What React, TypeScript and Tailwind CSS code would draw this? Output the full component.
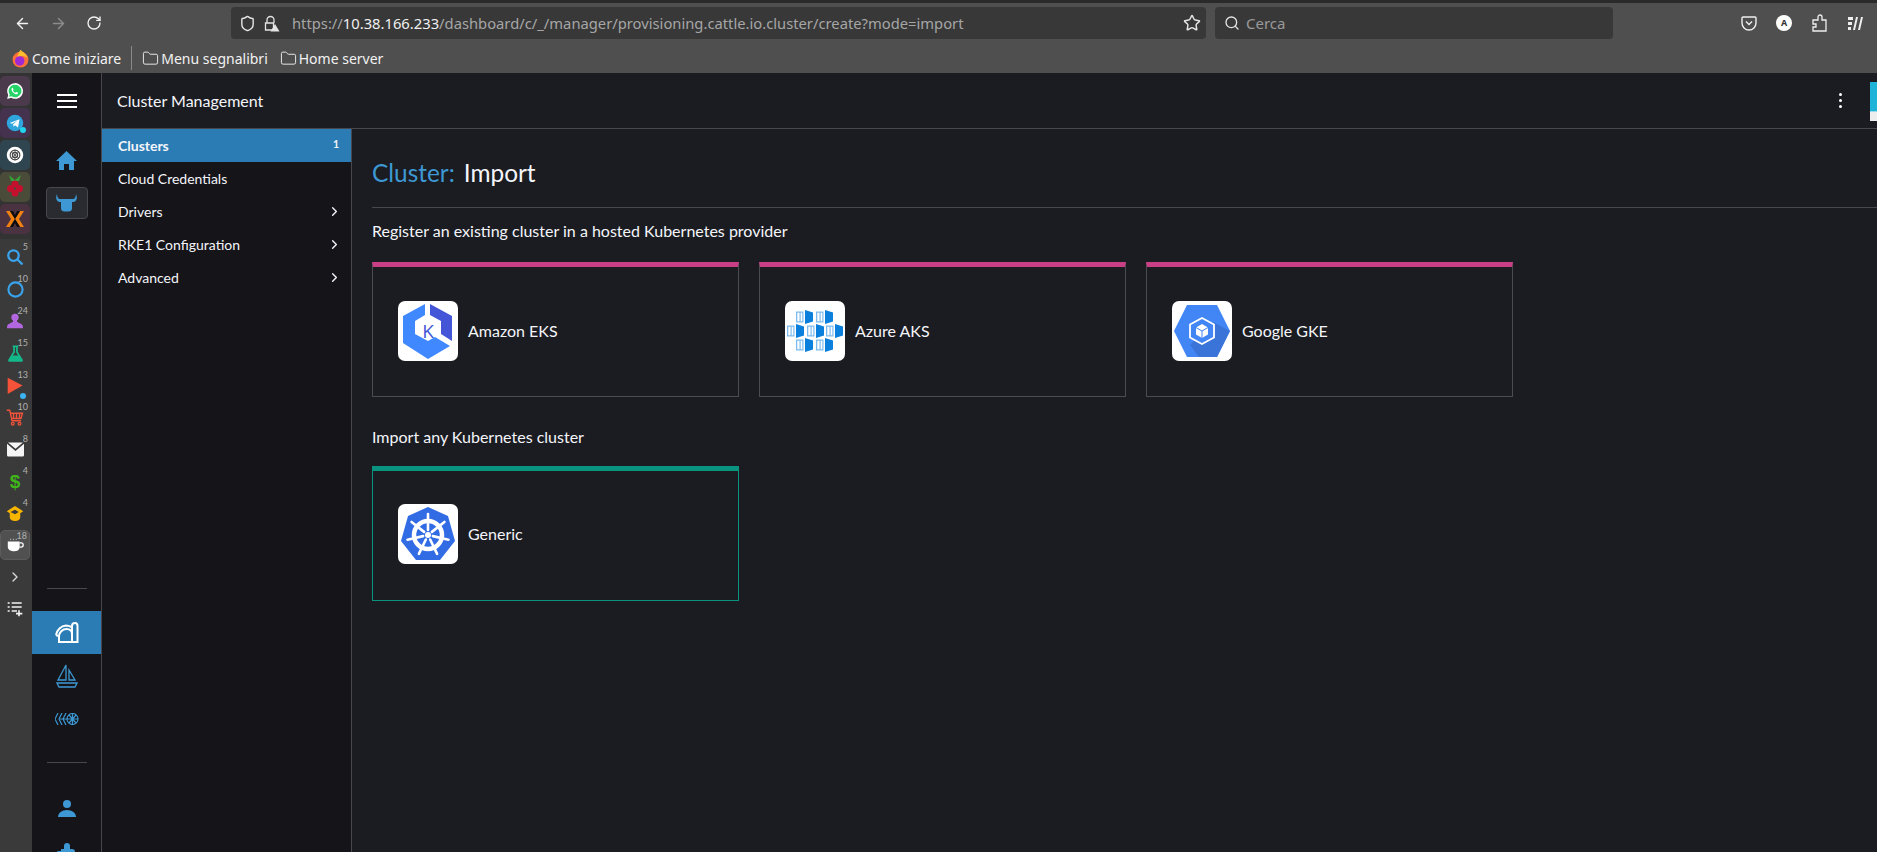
import React from "react";
import { ArrowLeft, ArrowRight, RotateCw, Shield, Star, Search, ChevronRight, Folder } from "lucide-react";

const Blue = "#3d98d3";

function Square({ bg, children }: { bg: string; children: React.ReactNode }) {
  return <div className="w-[30px] h-[30px] rounded-[5px] flex items-center justify-center mb-[2px] relative" style={{ background: bg }}>{children}</div>;
}

function Ext({ n, children, box }: { n: string; children: React.ReactNode; box?: boolean }) {
  return (
    <div className={"w-[30px] h-[30px] mb-[2px] rounded-[5px] flex items-center justify-center relative " + (box ? "bg-[#505050] border border-[#5c5c5c]" : "")}>
      {children}
      <span className="absolute right-[2px] top-[0px] text-[9px] leading-[10px] text-[#b0b0b0]">{n}</span>
    </div>
  );
}

function ExtBar() {
  return (
    <div className="w-[32px] shrink-0 bg-[#333333] flex flex-col">
      <div className="pt-[3px]">
        <Square bg="#4b3a4c">
          <svg width="18" height="18" viewBox="0 0 24 24"><path d="M12 1.5a10.5 10.5 0 0 0-9 15.8L1.5 22.5l5.4-1.4A10.5 10.5 0 1 0 12 1.5z" fill="#fff" /><path d="M12 3.6a8.4 8.4 0 0 0-7 13l-.9 3.2 3.3-.9A8.4 8.4 0 1 0 12 3.6z" fill="#25d366" /><path d="M8.9 7.5c-.3 0-.7.2-1 .6-.9 1.1-.8 2.6.4 4.5 1.3 2 3.100 3.300 5 3.800 1.300.3 2.400-.3 2.700-1.300.1-.4.1-.7 0-.8l-2-1c-.2-.1-.4 0-.5.1l-.7.9c-.1.1-.3.2-.5.100-1.300-.5-2.300-1.500-3-2.700-.1-.2 0-.3.1-.5l.5-.6c.1-.2.1-.3.1-.5l-.9-2.100c-.1-.3-.3-.5-.2-.5z" fill="#fff" /></svg>
        </Square>
        <Square bg="#44324f">
          <svg width="18" height="18" viewBox="0 0 24 24"><circle cx="12" cy="12" r="11" fill="#2ea6dd" /><path d="M5 12l13-5-2 11-4-3-2 2-.5-3.500 6-5-7.500 4.500z" fill="#fff" /></svg>
          <span className="absolute right-[4px] bottom-[5px] w-[6px] h-[6px] rounded-full bg-[#22d3ee]" />
        </Square>
        <Square bg="#2f4650">
          <svg width="18" height="18" viewBox="0 0 24 24"><circle cx="12" cy="12" r="11" fill="#fff" /><circle cx="12" cy="12" r="6.500" fill="none" stroke="#444" strokeWidth="1.500" /><circle cx="12" cy="12" r="3.500" fill="none" stroke="#444" strokeWidth="1.500" /><path d="M7 8l10 8M17 8L7 16M12 5v14" stroke="#444" strokeWidth="1" /></svg>
        </Square>
        <Square bg="#4b4b3a">
          <svg width="16" height="24" viewBox="0 0 16 24"><path d="M2 0l6 5 6-5-2 6H4z" fill="#35a33a" /><circle cx="8" cy="9" r="3.500" fill="#c5102d" /><circle cx="3.500" cy="13.500" r="3.500" fill="#c5102d" /><circle cx="12.500" cy="13.500" r="3.500" fill="#c5102d" /><circle cx="8" cy="18" r="3.500" fill="#c5102d" /></svg>
        </Square>
        <Square bg="#4a3240">
          <svg width="18" height="16" viewBox="0 0 18 16"><path d="M0 0h4l5 8-5 8H0l5-8zM18 0h-4L9 8l5 8h4l-5-8z" fill="#f08010" /><path d="M4 0h3l2 4 2-4h3L9 8l5 8h-3l-2-4-2 4H4l5-8z" fill="#0c0c0c" /></svg>
        </Square>
      </div>
      <div className="flex-1 mt-[3px] bg-[#3a3a3a] rounded-tr-[5px] pt-[3px]">
        <Ext n="5"><svg width="18" height="18" viewBox="0 0 24 24" fill="none" stroke="#3aa3ee" strokeWidth="3"><circle cx="10" cy="10" r="7" /><path d="M15 15l7 7" /></svg></Ext>
        <Ext n="10"><svg width="17" height="17" viewBox="0 0 24 24" fill="none" stroke="#3aa3ee" strokeWidth="3"><circle cx="12" cy="12" r="10" /></svg></Ext>
        <Ext n="24"><svg width="16" height="16" viewBox="0 0 24 24" fill="#b266e0"><circle cx="12" cy="6.500" r="5.500" /><path d="M9 10h6v3l7 4c1 .7 2 2 2 6H0c0-4 1-5.300 2-6l7-4z" /></svg></Ext>
        <Ext n="15"><svg width="17" height="17" viewBox="0 0 24 24" fill="none" stroke="#14b88a" strokeWidth="2.500"><path d="M8 2h8M10 2v8L3 21c-.5 1 0 1.500 1 1.500h16c1 0 1.500-.5 1-1.500l-7-11V2" /><path d="M7 16h10l2.500 5h-15z" fill="#14b88a" /></svg></Ext>
        <Ext n="13"><svg width="17" height="17" viewBox="0 0 24 24" fill="#f4533a"><path d="M1 1l21 11L1 24z" /></svg><span className="absolute right-[4px] bottom-[1px] w-[6px] h-[6px] rounded-full bg-[#3db4f2]" /></Ext>
        <Ext n="10"><svg width="18" height="18" viewBox="0 0 24 24" fill="none" stroke="#f0533a" strokeWidth="1.800"><path d="M1 3h4l3 14h12M6 7h16l-2 7H8M10 7v7M14 7v7M18 7v7" /><circle cx="9" cy="21" r="1.800" /><circle cx="18" cy="21" r="1.800" /></svg></Ext>
        <Ext n="8"><svg width="17" height="15" viewBox="0 0 24 20"><path d="M2 0h20a2 2 0 0 1 .5.1L12 9 1.500.1A2 2 0 0 1 2 0zM0 2l12 10L24 2v16a2 2 0 0 1-2 2H2a2 2 0 0 1-2-2z" fill="#f5f5f5" /></svg></Ext>
        <Ext n="4"><span className="text-[19px] leading-none font-bold text-[#3fb618]" style={{ fontFamily: "'Liberation Sans',sans-serif" }}>$</span></Ext>
        <Ext n="4"><svg width="18" height="17" viewBox="0 0 24 22"><path d="M12 1L1 8l4 2.500V16c0 3 3 5 7 5s7-2 7-5v-5.500L23 8z" fill="#f7b500" /><path d="M6 9l6-3 5 3-5 3z" fill="#3a3a3a" /></svg></Ext>
        <Ext n="18" box><svg width="17" height="14" viewBox="0 0 24 20" fill="#fff"><path d="M1 5h17v8c0 4-3 6-8 6s-9-2-9-6z" /><path d="M18 7h2a3 3 0 0 1 0 6h-2" fill="none" stroke="#fff" strokeWidth="1.800" /><path d="M5 1v2M9 1v2M13 1v2" stroke="#ddd" strokeWidth="1" /></svg></Ext>
        <div className="w-[30px] h-[30px] mb-[2px] flex items-center justify-center"><ChevronRight size={16} color="#d8d8d8" /></div>
        <div className="w-[30px] h-[30px] flex items-center justify-center">
          <svg width="16" height="16" viewBox="0 0 24 24" stroke="#f2f2f2" strokeWidth="2.500" fill="none"><path d="M1 3h3M7 3h15M1 9h3M7 9h15M1 15h3M7 15h8M18 14v9M13.500 19h9.500" /></svg>
        </div>
      </div>
    </div>
  );
}

function Rail() {
  return (
    <div className="w-[70px] shrink-0 bg-[#141419] border-r border-[#47474d] overflow-hidden">
      <div className="h-max flex flex-col items-center text-white">
        <div className="h-[55px] flex items-center justify-center">
          <div className="w-[20px] flex flex-col gap-[4px]"><span className="h-[2px] bg-white" /><span className="h-[2px] bg-white" /><span className="h-[2px] bg-white" /></div>
        </div>
        <div className="h-[33px] mt-[16px] flex items-center">
          <svg width="21" height="19" viewBox="0 0 21 19" fill={Blue}><path d="M10.500 0L21 10h-3v9h-5v-6H8v6H3v-9H0z" /></svg>
        </div>
        <div className="mt-[10px] w-[42px] h-[32px] rounded-[4px] bg-[#292b30] border border-[#47474d] flex items-center justify-center">
          <svg width="21" height="18" viewBox="0 0 21 18" fill={Blue}><path d="M5 5h11v9a3.500 3.500 0 0 1-3.500 3.500h-4A3.500 3.500 0 0 1 5 14z" /><path d="M1 0c-1.500 3-1 7 2 8h2V5H3C2 4 1 2 1 0zM20 0c1.500 3 1 7-2 8h-2V5h2c1-1 2-3 2-5z" /></svg>
        </div>
        <div className="h-[369px]" />
        <div className="w-[40px] h-px bg-[#47474d]" />
        <div className="mt-[22px] w-full h-[43px] bg-[#2b7cb5] flex items-center justify-center">
          <svg width="24" height="21" viewBox="0 0 24 21" fill="none" stroke="#fff" strokeWidth="2"><path d="M1 13C2 8 6 4 11 3.500c2 0 3.500 .5 5.500 1.500M1 13l2 1M4 20v-6c0-3.500 3.500-7 7.500-7S17 9 17 12v8z" /><path d="M17 20V4c0-2 1.500-3 3-3s2.500 1 2.500 3v16zM3 20h15" /></svg>
        </div>
        <div className="h-[43px] flex items-center justify-center">
          <svg width="22" height="24" viewBox="0 0 22 24" fill="none" stroke={Blue} strokeWidth="1.300"><path d="M10 1L2 16h8zM13 6l6 10h-6zM1 19h20l-2 4H3z" /></svg>
        </div>
        <div className="h-[43px] flex items-center justify-center">
          <svg width="24" height="12" viewBox="0 0 24 12" fill="none" stroke={Blue} strokeWidth="1.200"><path d="M3 0L0 6l3 6M7 0L4 6l3 6M11 0L8 6l3 6M5 6h7" /><circle cx="17.500" cy="6" r="5.500" /><path d="M12 6h11M17.500 .5v11M14 2l7 8M21 2l-7 8" /></svg>
        </div>
        <div className="mt-[22px] w-[40px] h-px bg-[#47474d]" />
        <div className="mt-[37px] h-[17px]">
          <svg width="18" height="17" viewBox="0 0 18 17" fill={Blue}><circle cx="9" cy="4" r="4" /><path d="M0 17c0-4 4-7 9-7s9 3 9 7z" /></svg>
        </div>
        <div className="mt-[26px] h-[22px]">
          <svg width="22" height="22" viewBox="0 0 22 22" fill={Blue}><path d="M8 3a3 3 0 0 1 6 0v3h2c2 0 3 1 3 3v2h1a3 3 0 0 1 0 6h-1v5H5v-8H3a3 3 0 0 1 0-6h2V6h3z" /></svg>
        </div>
      </div>
    </div>
  );
}

function NavItem({ label, active, badge, chevron }: { label: string; active?: boolean; badge?: string; chevron?: boolean }) {
  return (
    <div className={"h-[33px] pl-[16px] pr-[9px] pb-[1px] flex items-center justify-between text-[14px] text-[#f4f5fa] " + (active ? "bg-[#2b7cb5] font-bold" : "")}>
      <span>{label}</span>
      {badge && <span className="text-[10.500px] font-bold mr-[3px]">{badge}</span>}
      {chevron && <ChevronRight size={15} strokeWidth={2.200} color="#f4f5fa" />}
    </div>
  );
}

function Eks() {
  return (
    <svg width="60" height="60" viewBox="0 0 60 60">
      <path d="M27 3L5 15V42L30 58L52 45L37 36L30 40L17 33V20L27 14Z" fill="#3f88ff" />
      <path d="M32 3L54 15V40L43 33V20L32 14Z" fill="#4455d8" />
      <text x="30" y="37" textAnchor="middle" fontSize="19" fill="#4455d8" style={{ fontFamily: "'Open Sans',sans-serif" }}>K</text>
    </svg>
  );
}

function Cube({ x, y }: { x: number; y: number }) {
  return (
    <g transform={`translate(${x} ${y})`}>
      <path d="M9 0l8 2.500v9L9 14z" fill="#0a7fdc" />
      <path d="M0 1.500h7.500v11H0z" fill="#7dbcf0" />
      <path d="M1.300 2.800h2.200v8.400H1.300zM4.700 2.800h1.600v8.400H4.700z" fill="#fff" />
    </g>
  );
}

function Aks() {
  return (
    <svg width="60" height="60" viewBox="0 0 60 60">
      <Cube x={11} y={9} /><Cube x={31} y={9} />
      <Cube x={2} y={23} /><Cube x={22} y={23} /><Cube x={41} y={23} />
      <Cube x={11} y={37} /><Cube x={31} y={37} />
    </svg>
  );
}

function Gke() {
  return (
    <svg width="60" height="60" viewBox="0 0 60 60">
      <path d="M15 4h30l13 26-13 26H15L2 30z" fill="#4285f4" />
      <path d="M41 21l17 9-13 26H27L18 44z" fill="#3a74d8" />
      <path d="M30 17l12 6.500v13L30 43l-12-6.500v-13z" fill="#4285f4" stroke="#fff" strokeWidth="1.800" />
      <path d="M30 23l6 3.500v7L30 37l-6-3.500v-7z" fill="#fff" />
      <path d="M30 30l6-3.500M30 30l-6-3.500M30 30v7" stroke="#4285f4" strokeWidth="1" />
    </svg>
  );
}

function Wheel() {
  const spokes = [0, 51.4, 102.8, 154.3, 205.7, 257.1, 308.6];
  return (
    <svg width="60" height="60" viewBox="0 0 60 60">
      <path d="M30 3L50 12L57 37L42 56H18L3 37L10 12Z" fill="#326ce5" />
      <circle cx="30" cy="31" r="14" fill="none" stroke="#fff" strokeWidth="4.500" />
      <circle cx="30" cy="31" r="3" fill="#fff" />
      {spokes.map((a) => (
        <path key={a} d="M30 26V10" stroke="#fff" strokeWidth="2.600" strokeLinecap="round" transform={`rotate(${a} 30 31)`} />
      ))}
    </svg>
  );
}

function Card({ label, green, children }: { label: string; green?: boolean; children: React.ReactNode }) {
  return (
    <div className={"w-[367px] h-[135px] border border-t-[5px] pl-[25px] flex items-center gap-[10px] " + (green ? "border-[#0a9480] pb-[4px]" : "border-[#4b4b52] border-t-[#c83f86] pb-[2px]")}>
      <div className="w-[60px] h-[60px] bg-white rounded-[7px] flex items-center justify-center">{children}</div>
      <span className="text-[16px] text-[#f4f5fa]">{label}</span>
    </div>
  );
}

function Browser() {
  const ui = { fontFamily: "'Noto Sans','Open Sans',sans-serif" };
  return (
    <div className="shrink-0 bg-[#2b2a2a] pt-[3px]" style={ui}>
      <div className="bg-[#4f4f4f] h-[70px] text-[#f2f2f2]">
        <div className="h-[40px] flex items-center">
          <div className="w-[231px] pl-[14px] flex items-center gap-[19px]">
            <ArrowLeft size={17} />
            <ArrowRight size={17} color="#8c8c8c" />
            <RotateCw size={16} />
          </div>
          <div className="w-[975px] h-[32px] rounded-[4px] bg-[#383838] flex items-center pl-[8px] pr-[5px]">
            <Shield size={17} color="#e4e4e4" />
            <svg className="ml-[8px]" width="16" height="17" viewBox="0 0 16 17" fill="none" stroke="#e4e4e4" strokeWidth="1.300"><path d="M3 8V5a3.500 3.500 0 0 1 7 0v3M1.500 8h8v7h-8z" /><path d="M11 9l4.500 7.500h-9z" fill="#e4e4e4" stroke="none" /></svg>
            <span className="ml-[12px] text-[14.750px] text-[#a6a6a6] whitespace-nowrap">https://<span className="text-[#f0f0f0]">10.38.166.233</span>/dashboard/c/_/manager/provisioning.cattle.io.cluster/create?mode=import</span>
            <Star size={18} className="ml-auto" color="#e4e4e4" />
          </div>
          <div className="ml-[9px] w-[398px] h-[32px] rounded-[4px] bg-[#383838] flex items-center pl-[9px] text-[15px] text-[#9a9a9a] gap-[6px]">
            <Search size={16} color="#e4e4e4" />
            <span>Cerca</span>
          </div>
          <div className="ml-[128px] flex items-center">
            <svg width="16" height="17" viewBox="0 0 16 17" fill="none" stroke="#efefef" strokeWidth="1.400"><path d="M2 2h12c.5 0 1 .5 1 1v5a7 7 0 0 1-14 0V3c0-.5.5-1 1-1z" /><path d="M5 6.500l3 3 3-3" /></svg>
            <span className="ml-[19px] w-[16px] h-[16px] rounded-full bg-white text-[#333] text-[9px] font-bold flex items-center justify-center">A</span>
            <svg className="ml-[20px]" width="15" height="18" viewBox="0 0 15 18" fill="none" stroke="#efefef" strokeWidth="1.300"><path d="M1 6h5V3a2 2 0 0 1 4 0v3h4v11H1v-4h3v-3H1z" /></svg>
            <svg className="ml-[21px]" width="15" height="15" viewBox="0 0 15 15" fill="#efefef"><path d="M0 1h5v3H0zM0 6h4v3H0zM0 11h3v3H0zM8 1h2L7 14H5zM13 1h2l-3 13h-2z" /></svg>
          </div>
        </div>
        <div className="h-[30px] flex items-center text-[14px] pl-[11px]">
          <svg width="19" height="19" viewBox="0 0 24 24"><circle cx="12" cy="13.500" r="10" fill="#ff7139" /><path d="M12 1c3 3 7 5 9 10-5-3-10-3-13 0 0-4 2-7 4-10z" fill="#ffbd2e" /><circle cx="11" cy="15" r="6" fill="#9e2ad6" /></svg>
          <span className="ml-[2px]">Come iniziare</span>
          <span className="ml-[10px] w-px h-[24px] bg-[#8a8a8a]" />
          <Folder size={17} className="ml-[10px]" strokeWidth={1.300} />
          <span className="ml-[2px]">Menu segnalibri</span>
          <Folder size={17} className="ml-[12px]" strokeWidth={1.300} />
          <span className="ml-[2px]">Home server</span>
        </div>
      </div>
    </div>
  );
}

export default function App() {
  const lato = { fontFamily: "Lato,'Open Sans',sans-serif" };
  return (
    <div className="w-[1877px] h-[852px] overflow-hidden flex flex-col bg-[#1b1c21]">
      <Browser />
      <div className="flex-1 min-h-0 flex" style={lato}>
        <ExtBar />
        <Rail />
        <div className="flex-1 min-w-0 flex flex-col">
          <div className="h-[56px] shrink-0 border-b border-[#47474d] flex items-center pl-[15px]">
            <span className="text-[16px] text-[#f4f5fa]">Cluster Management</span>
            <div className="ml-auto mr-[28px] flex flex-col gap-[3px]">
              <span className="w-[3px] h-[3px] rounded-full bg-white" /><span className="w-[3px] h-[3px] rounded-full bg-white" /><span className="w-[3px] h-[3px] rounded-full bg-white" />
            </div>
            <div className="w-[7px] mt-[1px] flex flex-col">
              <div className="h-[29px] bg-[#1fb3d8]" /><div className="h-[1px] bg-[#9fd8ea]" /><div className="h-[9px] bg-[#eeeeee]" />
            </div>
          </div>
          <div className="flex-1 min-h-0 flex">
            <div className="w-[250px] shrink-0 bg-[#141419] border-r border-[#47474d]">
              <NavItem label="Clusters" active badge="1" />
              <NavItem label="Cloud Credentials" />
              <NavItem label="Drivers" chevron />
              <NavItem label="RKE1 Configuration" chevron />
              <NavItem label="Advanced" chevron />
            </div>
            <div className="flex-1 min-w-0 pl-[20px]">
              <div className="h-[79px] border-b border-[#47474d] flex items-center pt-[10px] text-[24.400px]">
                <span className="text-[#3d98d3]">Cluster:</span>
                <span className="ml-[9px] text-[#f4f5fa]">Import</span>
              </div>
              <div className="mt-[13px] text-[16px] leading-[20px] text-[#f4f5fa]">Register an existing cluster in a hosted Kubernetes provider</div>
              <div className="mt-[21px] flex gap-[20px]">
                <Card label="Amazon EKS"><Eks /></Card>
                <Card label="Azure AKS"><Aks /></Card>
                <Card label="Google GKE"><Gke /></Card>
              </div>
              <div className="mt-[30px] text-[16px] leading-[20px] text-[#f4f5fa]">Import any Kubernetes cluster</div>
              <div className="mt-[19px]">
                <Card label="Generic" green><Wheel /></Card>
              </div>
            </div>
          </div>
        </div>
      </div>
    </div>
  );
}
